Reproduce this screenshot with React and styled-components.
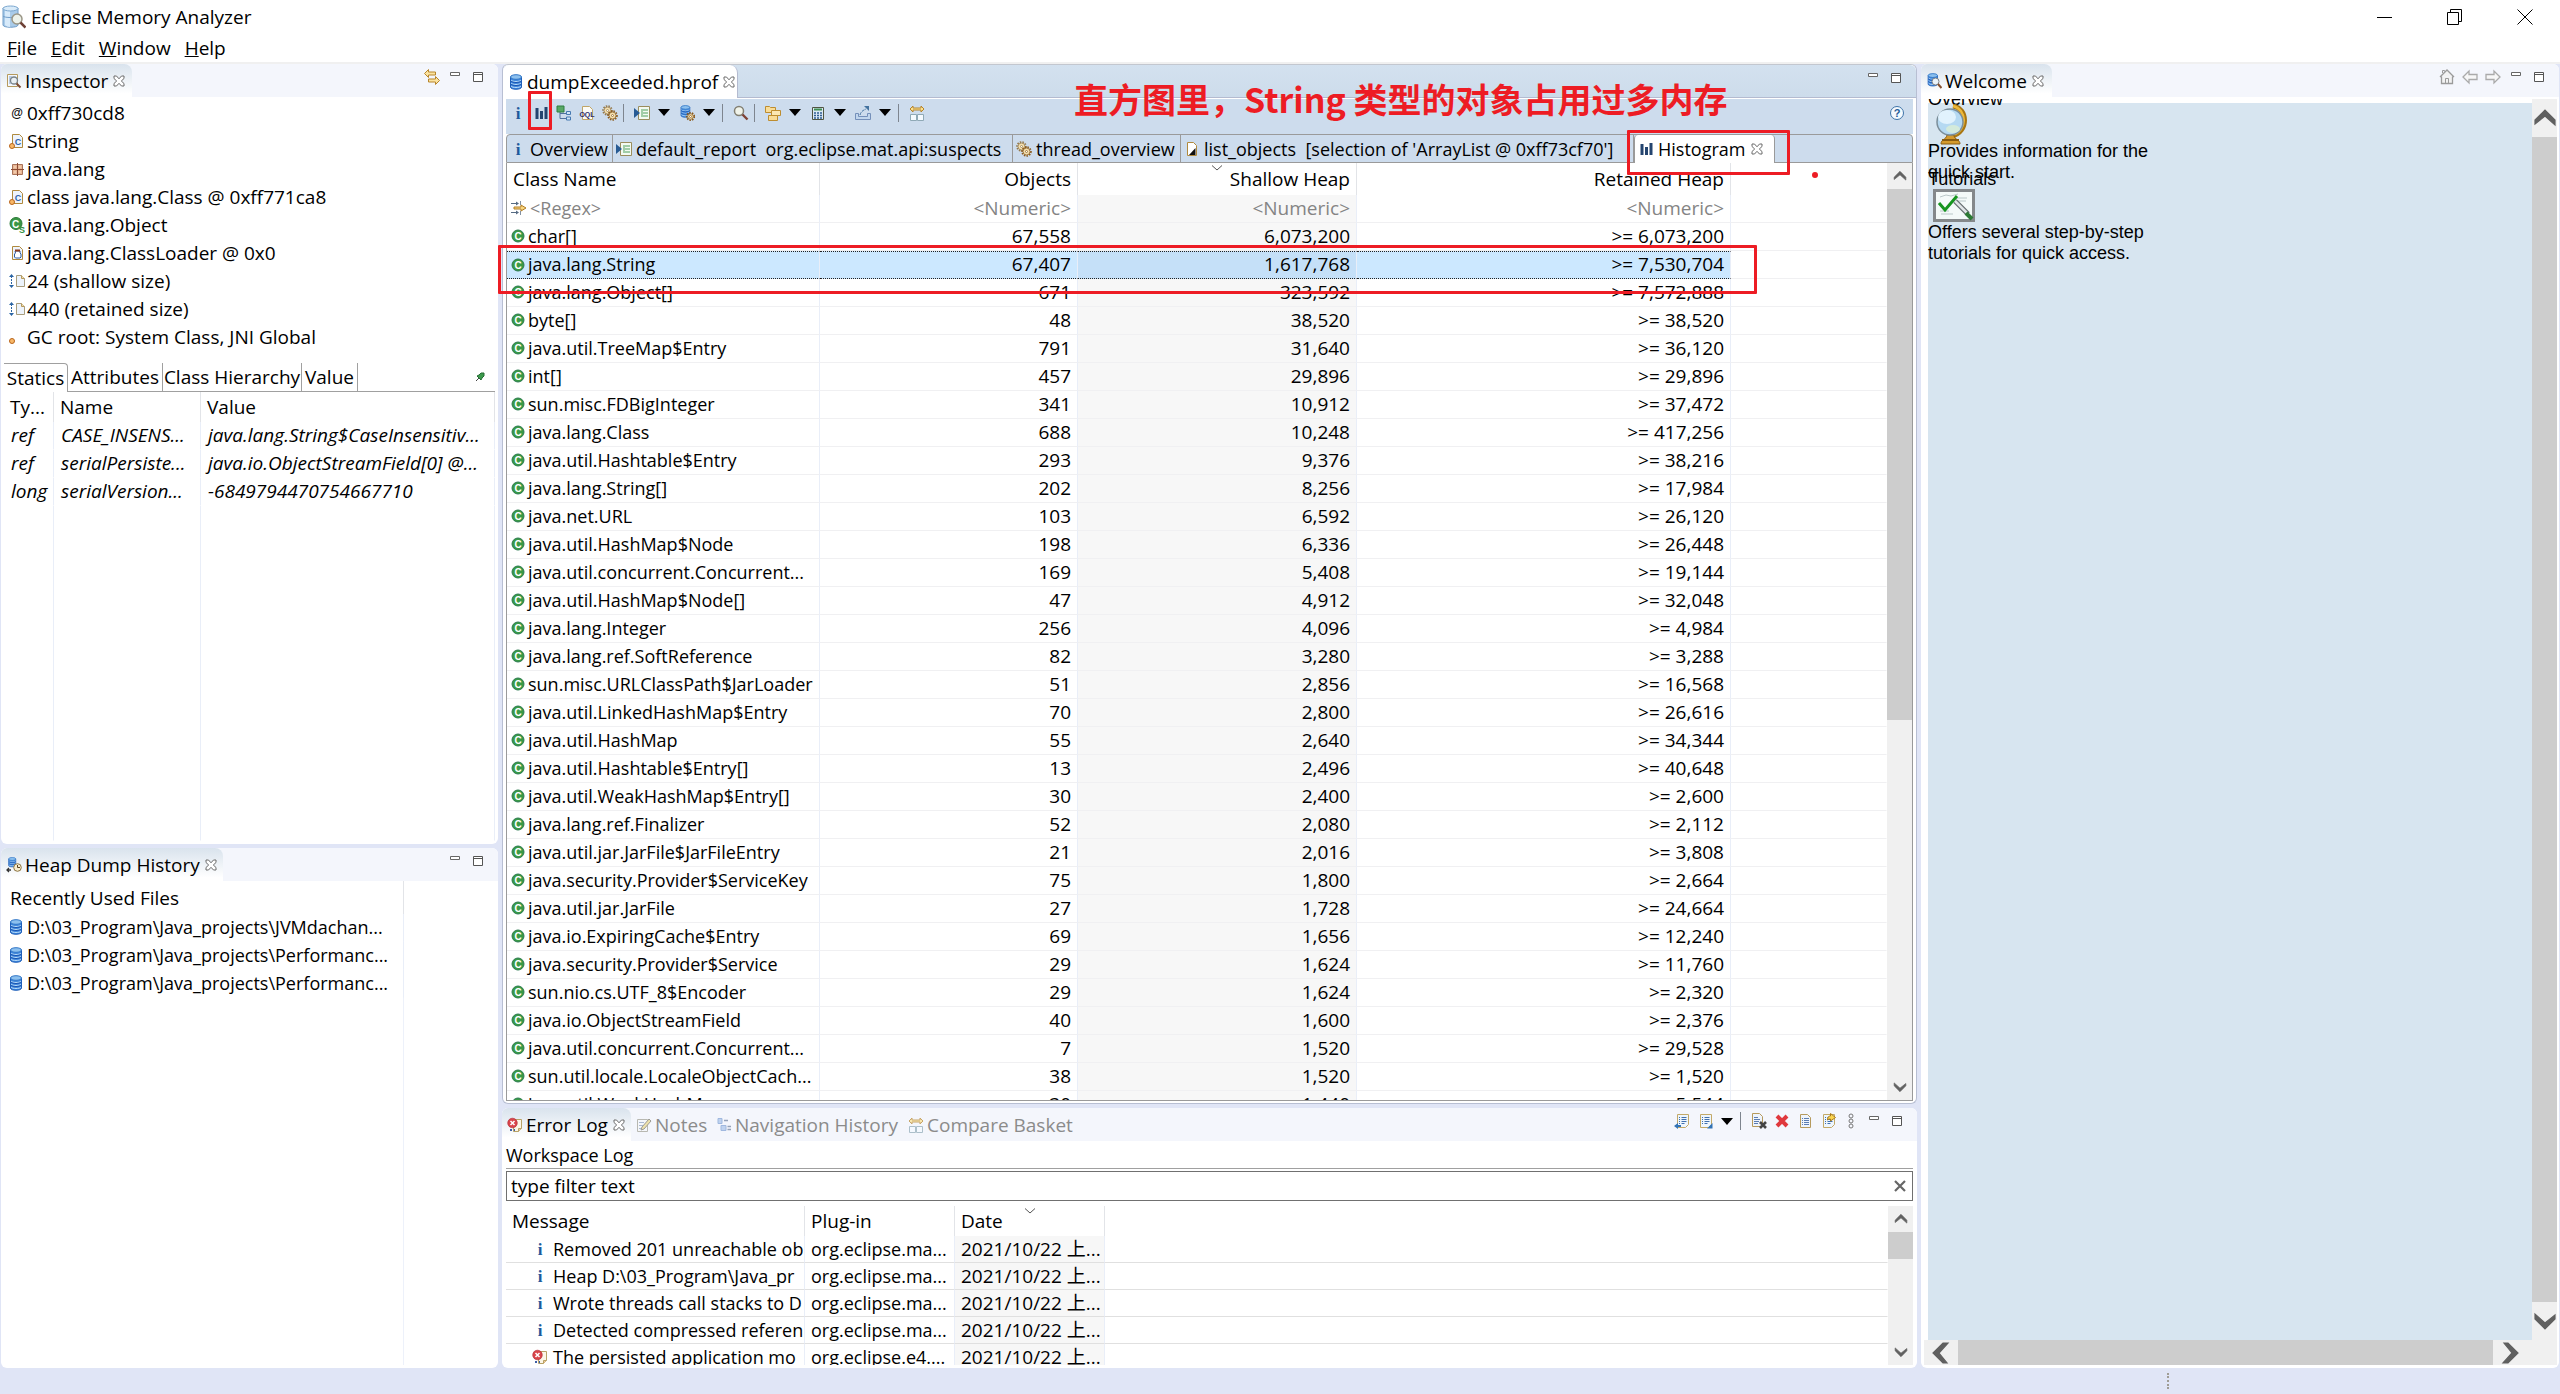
import { useState } from "react";
import styled, { createGlobalStyle, css } from "styled-components";

const GlobalStyle = createGlobalStyle`
  * {
    box-sizing: border-box;
  }
  body {
    margin: 0;
    background: #e0e5f6;
    color: #000;
    font-family: "Open Sans", "Noto Sans CJK SC", sans-serif;
    font-size: 19px;
    line-height: 28px;
  }
  button, input {
    font: inherit;
    color: inherit;
    padding: 0;
    margin: 0;
    border: none;
    background: none;
  }
  h1, h2, p, ul {
    margin: 0;
    padding: 0;
    font-weight: 400;
    list-style: none;
  }
  svg {
    display: block;
    flex: none;
  }
`;

/* ---------- icons ---------- */

const Svg = ({ size = 16, w, h, box = "0 0 16 16", children }) => (
    <svg width={w || size} height={h || size} viewBox={box} fill="none" aria-hidden="true">
        {children}
    </svg>
);

const Letter = ({ x, y, size, fill, serif, children }) => (
    <text
        x={x}
        y={y}
        fontSize={size}
        fill={fill}
        fontWeight="700"
        textAnchor="middle"
        fontFamily={serif ? "Liberation Serif, serif" : "Liberation Sans, sans-serif"}
    >
        {children}
    </text>
);

const DbShape = () => (
    <>
        <path d="M2.5 3v10c0 3 11 3 11 0V3z" fill="#3f87dd" stroke="#1f5fb8" />
        <path d="M3 6c1 2 9 2 10 0M3 9c1 2 9 2 10 0M3 12c1 2 9 2 10 0" stroke="#b9dcf8" />
        <path d="M3 7c1 2 9 2 10 0M3 10c1 2 9 2 10 0" stroke="#1a55b0" />
        <ellipse cx="8" cy="3" rx="5.5" ry="2.3" fill="#8cc0ee" stroke="#2f75c6" />
    </>
);
const GearShape = ({ x, y, r, color = "#8a5a1c", fill = "#f3dfae" }) => (
    <>
        <circle cx={x} cy={y} r={r} stroke={color} strokeWidth="1.6" strokeDasharray="1.5 1.2" />
        <circle cx={x} cy={y} r={r - 1} fill={fill} stroke={color} strokeWidth=".8" />
        <circle cx={x} cy={y} r="1" fill="#fff" stroke={color} strokeWidth=".7" />
    </>
);
const PageShape = () => <path d="M3.5 1.5h7l3 3v10h-10z" fill="#eef4fc" stroke="#b08a3e" />;

const AppIcon = () => (
    <Svg w={24} h={24} box="0 0 24 24">
        <path d="M1 3v17c0 3 15 3 15 0V3z" fill="#a9cbe9" stroke="#6f9cc8" />
        <path d="M3 5v15c1 1 3 2 5 2V5z" fill="#d7eafa" />
        <path d="M1 11c1 2 14 2 15 0" stroke="#6f9cc8" />
        <ellipse cx="8.500" cy="3.500" rx="7.500" ry="2.500" fill="#d9ebf9" stroke="#7ba7cf" />
        <circle cx="15" cy="14" r="5" fill="#edf2ea" stroke="#9b9787" strokeWidth="1.500" />
        <path d="M18.500 17.500l5 5" stroke="#6e4136" strokeWidth="2.500" />
    </Svg>
);
const InspectorIcon = () => (
    <Svg>
        <path d="M1.500 1.500h10v12h-10z" fill="#f4f8fd" stroke="#b69a5d" />
        <path d="M3 4h3M3 6h2M3 8h2M3 10h3" stroke="#7f9cc4" />
        <circle cx="8" cy="7.500" r="3.500" fill="#eaf0f4" stroke="#77828a" strokeWidth="1.300" />
        <path d="M10.500 10.500l4 4" stroke="#7b4a34" strokeWidth="2" />
    </Svg>
);
const AtIcon = () => <Svg><Letter x="8" y="12" size="12" fill="#111">@</Letter></Svg>;
const ObjectIcon = () => (
    <Svg>
        <PageShape />
        <Letter x="9" y="11.500" size="9" fill="#2b63ad">C</Letter>
        <circle cx="3" cy="13" r="2.500" fill="#f8b868" stroke="#b9641a" />
    </Svg>
);
const PackageIcon = () => (
    <Svg>
        <path d="M3.500 3.500h10v10h-10z" fill="#e9b794" stroke="#a8735a" />
        <path d="M8.500 2v13M2 8.500h13" stroke="#8d4b33" />
        <path d="M6 5v2M11 5v2M6 10v2M11 10v2" stroke="#f7dcc6" />
    </Svg>
);
const SuperIcon = () => (
    <Svg>
        <circle cx="7" cy="6.500" r="6" fill="#3b9646" stroke="#2b7a38" />
        <Letter x="6.500" y="10.500" size="10" fill="#fff">C</Letter>
        <Letter x="13" y="15.500" size="9" fill="#2f9040">S</Letter>
    </Svg>
);
const LoaderIcon = () => (
    <Svg>
        <PageShape />
        <path d="M6 6h5v2l1 1v3l-1 1H6.500l-1-1V9l1-1z" fill="#fff" stroke="#2c5c9e" />
        <path d="M6 5.500h5" stroke="#8a3a1a" strokeWidth="2" />
    </Svg>
);
const SizeIcon = () => (
    <Svg>
        <path d="M2.500 3v10" stroke="#2a64a3" strokeDasharray="2 1" />
        <path d="M0 4l2.500-3L5 4zM0 12l2.500 3L5 12z" fill="#2a64a3" />
        <path d="M7.500 2.500h5l3 3v8h-8z" fill="#edf3fb" stroke="#a99d7c" />
        <path d="M12.500 2.500v3h3" fill="#f3dfae" stroke="#b69a5d" />
    </Svg>
);
const RootIcon = () => (
    <Svg>
        <circle cx="3" cy="12" r="2.500" fill="#f8b868" stroke="#b9641a" />
    </Svg>
);
const DbIcon = () => <Svg><DbShape /></Svg>;
const HistoryIcon = () => (
    <Svg>
        <g transform="translate(1 0) scale(.65)"><DbShape /></g>
        <circle cx="11.500" cy="10.500" r="3.800" fill="#f7eccf" stroke="#8d7440" />
        <path d="M11.500 8v2.500H14" stroke="#5a4520" />
        <path d="M5 13H1M3 11l-2 2 2 2" stroke="#333" strokeWidth="1.300" />
    </Svg>
);
const InfoIcon = () => <Svg><Letter x="8" y="14" size="17" fill="#1e5a9c" serif>i</Letter></Svg>;
const BarsIcon = () => (
    <Svg>
        <path d="M4 3v11M8.500 6v8M13 2v12" stroke="#24446f" strokeWidth="3" />
    </Svg>
);
const TreeIcon = () => (
    <Svg>
        <path d="M4 7v6.500h6M4 8.500h6" stroke="#50719e" />
        <path d="M1 1h7v6H1z" fill="#58a866" stroke="#2f7f40" />
        <path d="M10.500 6.500h4v3h-4zM10.500 12h4v3h-4z" fill="#cfe4f7" stroke="#4679b1" />
    </Svg>
);
const OqlIcon = () => (
    <Svg>
        <path d="M3.500 1.500h7l3 3v10h-10z" fill="#fbfbf6" stroke="#c0a566" />
        <Letter x="8" y="11.500" size="7" fill="#2c2a66">OQL</Letter>
    </Svg>
);
const GearsIcon = () => (
    <Svg>
        <GearShape x={5.5} y={5.5} r={4.5} color="#94794b" />
        <GearShape x={10.5} y={10.5} r={4.5} />
    </Svg>
);
const ReportIcon = () => (
    <Svg>
        <path d="M4.500 1.500h11v13h-11z" fill="#f3faf1" stroke="#9a8d5d" />
        <path d="M8 4v8M9 5h5M9 8h5M9 11h5" stroke="#4f9f5c" />
        <path d="M0 3l6 5-6 5z" fill="#275b94" />
    </Svg>
);
const DbGearIcon = () => (
    <Svg>
        <g transform="scale(.8)"><DbShape /></g>
        <GearShape x={11.5} y={11.5} r={3.8} />
    </Svg>
);
const SearchIcon = () => (
    <Svg>
        <circle cx="6" cy="6" r="4.500" fill="#f0f3ea" stroke="#827f72" strokeWidth="1.500" />
        <path d="M9.500 9.500l5 5" stroke="#7e4235" strokeWidth="2.400" />
    </Svg>
);
const FoldersIcon = () => (
    <Svg>
        <path d="M.5 1.500h4l1 1h5v5H.5z" fill="#f9dc97" stroke="#bd8d30" />
        <path d="M6.500 5.500h9v5h-9z" fill="#fbe7b3" stroke="#bd8d30" />
        <path d="M3.500 10.500h9v5h-9z" fill="#f9dc97" stroke="#bd8d30" />
    </Svg>
);
const CalcIcon = () => (
    <Svg>
        <path d="M2.500 2.500h11v12h-11z" fill="#dbe9f6" stroke="#505541" />
        <path d="M4 4.500h8" stroke="#3f8f51" strokeWidth="2" />
        <path d="M4 8h8M4 10.500h8M4 13h8" stroke="#315e91" strokeWidth="1.500" strokeDasharray="2 1" />
    </Svg>
);
const ExportIcon = () => (
    <Svg>
        <path d="M.5 8.500h3v3h9v-3h3v6H.5z" fill="#c1d6ed" stroke="#7590ba" />
        <path d="M5 10c1-4 4-5 6-6" stroke="#44739f" strokeDasharray="3 1" />
        <path d="M9 1h5v5z" fill="#44739f" />
    </Svg>
);
const CompareIcon = () => (
    <Svg>
        <path d="M1 4l3-3v2h8V1l3 3-3 3V5H4v2z" fill="#fbe08f" stroke="#b5842c" />
        <path d="M1.500 9.500h6v6h-6zM8.500 9.500h6v6h-6z" fill="#f4faff" stroke="#8fa9b6" />
    </Svg>
);
const ListIcon = () => (
    <Svg>
        <path d="M3.500 1.500h6l3 3v10h-9z" fill="#fff" stroke="#b08a3e" />
        <path d="M11.500 7v7H5z" fill="#111" />
    </Svg>
);
const FilterIcon = () => (
    <Svg>
        <path d="M0 3.500h6M0 12.500h6" stroke="#566b83" />
        <path d="M5 1.500l3 2-3 2zM5 10.500l3 2-3 2z" fill="#566b83" />
        <path d="M9.500 1v4M9.500 11v4" stroke="#8391a2" />
        <path d="M3 7h7V5l5 3-5 3V9H3z" fill="#fbd780" stroke="#b07d24" />
    </Svg>
);
const ClassIcon = () => (
    <Svg size={14} box="0 0 14 14">
        <circle cx="7" cy="7" r="6" fill="#3a9a45" stroke="#2b7a50" />
        <Letter x="7" y="10.500" size="10" fill="#fff">C</Letter>
    </Svg>
);
const ErrorIcon = () => (
    <Svg>
        <path d="M6.500 2.500h8v9l-3 3h-5z" fill="#fbf6e7" stroke="#b8a267" />
        <path d="M11.500 14.500v-3h3" fill="#f0c89a" stroke="#b8a267" />
        <circle cx="5.500" cy="6" r="4.800" fill="#d9444a" stroke="#b02a35" strokeWidth=".6" />
        <path d="M3.500 4l4 4M7.500 4l-4 4" stroke="#fff" strokeWidth="1.500" />
        <path d="M3 13h2M7 13h1" stroke="#3d5fa5" strokeWidth="2" />
    </Svg>
);
const NotesIcon = () => (
    <Svg>
        <path d="M1.500 2.500h10v12h-10z" fill="#f6f8fb" stroke="#a09e92" />
        <path d="M3 5.500h5M3 8.500h4M3 11.500h6" stroke="#8fa1c0" />
        <path d="M6 10l7-8 2 2-7 8-3 1z" fill="#ecd98a" stroke="#78766a" />
    </Svg>
);
const NavIcon = () => (
    <Svg>
        <path d="M2 1.500h4v5H2zM5 8.500h5v5H5z" fill="#a9c4ea" stroke="#7d9fd3" />
        <path d="M8 3.500h4M11.500 9.500H15M11.500 12.500H15" stroke="#6c7f9c" strokeWidth="1.300" />
    </Svg>
);
const LinkIcon = () => (
    <Svg>
        <path d="M.5 4.500l4-4v2.500h7v3h-7v2.500z" fill="#fbe3a1" stroke="#b8862b" />
        <path d="M15.500 11.500l-4-4V10h-7v3h7v2.500z" fill="#fbe3a1" stroke="#b8862b" />
    </Svg>
);
const MinIcon = () => <Svg><path d="M3.500 3.500h9v3h-9z" fill="#fff" stroke="#666" /></Svg>;
const MaxIcon = () => (
    <Svg><path d="M3.500 3.500h9v9h-9zM3.500 5.500h9" fill="#fff" stroke="#555" /></Svg>
);
const CloseIcon = () => (
    <Svg size={12} box="0 0 12 12">
        <path
            d="M1 1h2.500L6 3.800 8.500 1H11v2.500L8.300 6 11 8.500V11H8.500L6 8.300 3.500 11H1V8.500L3.700 6 1 3.500z"
            fill="#fff"
            stroke="#6b6b6b"
        />
    </Svg>
);
const HomeIcon = () => (
    <Svg>
        <path d="M2.500 7.500v7h11v-7M1 8l7-7 7 7" fill="#f2f2f2" stroke="#9b9b9b" strokeWidth="1.300" />
        <path d="M6.500 14V9.500h3V14M3.500 4V1.500h2v1" stroke="#9b9b9b" />
    </Svg>
);
const BackIcon = () => (
    <Svg><path d="M1 8l6-6v3.500h8v5H7V14z" fill="#f7f7f7" stroke="#aaa" strokeWidth="1.300" /></Svg>
);
const ForwardIcon = () => (
    <Svg><path d="M15 8L9 2v3.500H1v5h8V14z" fill="#f7f7f7" stroke="#aaa" strokeWidth="1.300" /></Svg>
);
const HelpIcon = () => (
    <Svg>
        <circle cx="8" cy="8" r="6.500" fill="#f5faff" stroke="#3f74a8" />
        <Letter x="8" y="12" size="11" fill="#275d98">?</Letter>
    </Svg>
);
const LogLines = () => (
    <>
        <path d="M3.500 1.500h11v10l-3 3h-8z" fill="#eef6fd" stroke="#c3a968" />
        <path d="M5 4.500h1M7.500 4.500h5M5 6.500h1M7.500 6.500h5M5 8.500h1M7.500 8.500h5M5 10.500h1M7.500 10.500h3" stroke="#4170ae" />
    </>
);
const ExportLogIcon = () => (
    <Svg><LogLines /><path d="M0 13l4-3v2h3v2H4v2z" fill="#3273b5" /></Svg>
);
const ImportLogIcon = () => (
    <Svg><LogLines /><path d="M15.500 10v5.500H10z" fill="#3273b5" /></Svg>
);
const ClearLogIcon = () => (
    <Svg>
        <path d="M1.500.5h7l3 3v10h-10z" fill="#eef4fc" stroke="#b69a5d" />
        <path d="M3 4.500h4M3 6.500h6M3 8.500h5M3 10.500h4" stroke="#5b7db3" />
        <path d="M9 9l6 6M15 9l-6 6" stroke="#444" strokeWidth="2.600" />
    </Svg>
);
const DeleteIcon = () => (
    <Svg><path d="M3 3l10 10M13 3L3 13" stroke="#e0383d" strokeWidth="4" /></Svg>
);
const OpenLogIcon = () => (
    <Svg>
        <path d="M3.500 1.500h7l3 3v10h-10z" fill="#eef4fc" stroke="#b69a5d" />
        <path d="M5 5.500h1M7 5.500h5M5 7.500h1M7 7.500h5M5 9.500h1M7 9.500h5M5 11.500h1M7 11.500h5" stroke="#5b7db3" />
    </Svg>
);
const RestoreLogIcon = () => (
    <Svg>
        <LogLines />
        <path d="M7.500 7c0-3 1-4 3-4V.5l5 4-5 3.500V6c-1 0-2 0-3 1z" fill="#fbd54f" stroke="#a87a1d" />
    </Svg>
);
const MenuDotsIcon = () => (
    <Svg>
        <circle cx="8" cy="3" r="2" stroke="#777" />
        <circle cx="8" cy="8" r="2" stroke="#777" />
        <circle cx="8" cy="13" r="2" stroke="#777" />
    </Svg>
);
const PinIcon = () => (
    <Svg size={10} box="0 0 10 10">
        <path d="M1 9l3-3" stroke="#444" />
        <path d="M2 4l2-1 2-2h3v3L7 6 6 8z" fill="#3c9a4c" stroke="#246c33" />
    </Svg>
);
const WelcomeIcon = () => (
    <Svg>
        <g transform="scale(.85)"><DbShape /></g>
        <circle cx="9.500" cy="8.500" r="3.500" fill="#eaf3fa" stroke="#7b7f83" />
        <path d="M12 11l3.500 4" stroke="#84502f" strokeWidth="2" />
    </Svg>
);
const DownIcon = () => <Svg w={12} h={7} box="0 0 12 7"><path d="M0 0h12L6 7z" fill="#000" /></Svg>;
const SortMark = () => (
    <Svg w={12} h={6} box="0 0 12 6"><path d="M1 .5l5 4.500 5-4.500" stroke="#555" /></Svg>
);

const angles = { up: 0, right: 90, down: 180, left: 270 };
const Chevron = ({ dir, size }) => (
    <Svg size={size} box="0 0 12 12">
        <path d="M1 9V7l5-5 5 5v2.500L6 5z" fill="#606060" stroke="#606060" strokeWidth=".6" transform={`rotate(${angles[dir]} 6 6)`} />
    </Svg>
);

const GlobeIcon = () => (
    <Svg w={36} h={42} box="0 0 36 42">
        <path d="M20 2c15 2 16 26-1 30" stroke="#a87512" strokeWidth="5" />
        <path d="M20 2c14 3 15 25-1 29" stroke="#edb83a" strokeWidth="2.500" />
        <path d="M8 40c0-5 5-4 6-9h7c0 5 6 4 6 9z" fill="#d49a2d" stroke="#8a5c10" />
        <path d="M9 36h17" stroke="#8a5c10" strokeWidth="2" />
        <circle cx="17" cy="18" r="13" fill="#b5d9f2" stroke="#7c8e99" strokeWidth="1.500" />
        <ellipse cx="14" cy="13" rx="9" ry="7" fill="#e1f2fd" />
        <ellipse cx="20" cy="25" rx="7" ry="4" fill="#d3eadb" />
    </Svg>
);
const BoardIcon = () => (
    <Svg w={42} h={33} box="0 0 42 33">
        <path d="M1.500 1.500h39v30h-39z" fill="#f4faf9" stroke="#84888b" strokeWidth="3" />
        <path d="M7 8l6-2 5 1 7-2M7 22h9M8 25h12M24 9h10M25 12h8" stroke="#bac8c9" />
        <path d="M6 14l6 7L24 7" stroke="#16951f" strokeWidth="3" />
        <path d="M22 12l13 13" stroke="#646b6e" strokeWidth="5" />
        <path d="M22 12l12 12" stroke="#dfe4e6" strokeWidth="2.500" />
        <path d="M33 24l6 6" stroke="#2c7a35" strokeWidth="4" />
    </Svg>
);

/* ---------- window ---------- */

const Shell = styled.div`
    display: flex;
    flex-direction: column;
    height: 100vh;
`;
const TitleBar = styled.header`
    display: flex;
    align-items: center;
    height: 34px;
    padding-left: 2px;
    background: #fff;
`;
const AppTitle = styled.h1`
    flex: 1;
    padding-left: 5px;
    font-size: 19px;
`;
const WindowButton = styled.button`
    display: grid;
    place-items: center;
    width: 70px;
    height: 34px;
`;
const MenuBar = styled.nav`
    display: flex;
    gap: 14px;
    height: 30px;
    padding-left: 7px;
    background: #fff;
    border-bottom: 2px solid #f0f0f0;
`;
const MenuItem = styled.button`
    white-space: nowrap;
`;
const Workbench = styled.main`
    flex: 1;
    min-height: 0;
    display: grid;
    grid-template-columns: 497fr 1415fr 638fr;
    gap: 4px;
    padding: 0 1px;
`;
const Column = styled.div`
    display: grid;
    grid-template-rows: ${(p) => p.$rows};
    gap: 4px;
    min-width: 0;
    min-height: 0;
`;
const StatusBar = styled.footer`
    display: flex;
    justify-content: flex-end;
    height: 26px;
    padding: 5px 391px 5px 0;
`;
const Grip = styled.div`
    width: 2px;
    border-left: 2px dotted #a09d95;
`;

/* ---------- panels ---------- */

const Panel = styled.section`
    position: relative;
    display: flex;
    flex-direction: column;
    min-width: 0;
    min-height: 0;
    padding-bottom: 3px;
    background: #fff;
    border-radius: 6px;
    ${(p) =>
        p.$editor &&
        css`
            padding: 0 3px;
            border: 1px solid #b8bfd3;
            border-top-color: #c3c7cf;
        `}
`;
const PanelHead = styled.div`
    display: flex;
    height: 33px;
    padding-right: 9px;
    background: #f4f6fc;
    border-radius: 6px 6px 0 0;
    ${(p) =>
        p.$editor &&
        css`
            margin: 0 -3px 1px;
            background: linear-gradient(#d3e1ef, #cddceb);
            border-bottom: 1px solid #b4bbd0;
        `}
`;
const ViewTab = styled.div`
    display: flex;
    align-items: center;
    gap: 3px;
    width: ${(p) => p.$w}px;
    padding-left: 5px;
    white-space: nowrap;
    color: ${(p) => (p.$active ? "#000" : "#8b8b8b")};
    border-radius: 6px 8px 0 0;
    ${(p) => p.$active && "background: linear-gradient(#d9e3ed, #fff 90%);"}
    ${(p) => p.$editor && "background: #fff; border-right: 1px solid #b4bbd0; height: 33px;"}
    ${(p) => !p.$active && "svg { opacity: 0.7; }"}
`;
const CloseButton = styled.button`
    margin-left: 2px;
`;
const HeadTools = styled.div`
    display: flex;
    margin-left: auto;
    height: 26px;
`;
const IconButton = styled.button`
    display: grid;
    place-items: center;
    width: 23px;
    flex: none;
`;
const DropButton = styled.button`
    display: grid;
    place-items: center;
    width: 22px;
    flex: none;
`;
const Separator = styled.span`
    width: 1px;
    height: 18px;
    margin: 0 6px 0 2px;
    align-self: center;
    background: #7e858f;
`;

/* ---------- inspector ---------- */

const ItemList = styled.ul`
    padding: 2px 0 12px 8px;
`;
const Item = styled.li`
    display: flex;
    align-items: center;
    gap: 2px;
    height: 28px;
    white-space: nowrap;
`;
const SubTabs = styled.div`
    display: flex;
    align-items: center;
    height: 29px;
    margin: 0 3px;
    padding-right: 10px;
    border-bottom: 1px solid #a0a0a0;
`;
const SubTab = styled.button`
    height: 29px;
    width: ${(p) => p.$w}px;
    white-space: nowrap;
    border-right: 1px solid #a0a0a0;
    ${(p) => p.$active && "background: #fff; border-top: 1px solid #a0a0a0; border-radius: 0 4px 0 0;"}
`;
const Spacer = styled.span`
    flex: 1;
`;

/* ---------- tables ---------- */

const TableArea = styled.div`
    flex: 1;
    display: flex;
    min-height: 0;
    margin: ${(p) => p.$margin || "0"};
    background: #fff;
`;
const TableClip = styled.div`
    flex: 1;
    min-width: 0;
    overflow: hidden;
    padding-left: ${(p) => p.$indent || 0}px;
    ${(p) => p.$ruled && "background: linear-gradient(#edf1fa, #edf1fa) 402px 0 / 1px 100% no-repeat;"}
`;
const Table = styled.table`
    width: 100%;
    ${(p) => p.$fill && "height: 100%;"}
    table-layout: fixed;
    border-collapse: separate;
    border-spacing: 0;
`;
const Th = styled.th`
    position: relative;
    height: ${(p) => p.$h || 30}px;
    padding: 0 6px;
    font-weight: 400;
    text-align: ${(p) => (p.$num ? "right" : "left")};
    white-space: nowrap;
    border-right: 1px solid ${(p) => (p.$last ? "transparent" : "#e2e4e8")};
`;
const SortSpot = styled.span`
    position: absolute;
    top: 2px;
    left: 50%;
    margin-left: -6px;
`;
const Tr = styled.tr`
    height: ${(p) => p.$h || 28}px;
    ${(p) => p.$italic && "font-style: italic;"}
    ${(p) => p.$muted && "color: #848484;"}
`;
const Td = styled.td`
    padding: 0 ${(p) => (p.$num ? 6 : 0)}px 0 ${(p) => p.$pad ?? 4}px;
    line-height: 26px;
    text-align: ${(p) => (p.$num ? "right" : "left")};
    white-space: nowrap;
    overflow: hidden;
    vertical-align: top;
    background: ${(p) => (p.$sorted ? "#f7f7f7" : "transparent")};
    border-right: 1px solid ${(p) => (p.$last ? "transparent" : "#e9eef8")};
    border-bottom: 1px solid ${(p) => (p.$plain ? "transparent" : p.$line || "#f0f0f2")};
    ${(p) =>
        p.$selected &&
        css`
            line-height: 25px;
            background: ${p.$sorted ? "#c5e0f8" : "#cce8ff"};
            border-top: 1px dotted #222;
            border-bottom: 1px dotted #222;
        `}
`;
const NameCell = styled.div`
    display: flex;
    align-items: center;
    gap: ${(p) => p.$gap || 3}px;
    font-size: 18px;
`;

/* ---------- scroll bars ---------- */

const Bar = styled.div`
    display: flex;
    flex-direction: ${(p) => (p.$across ? "row" : "column")};
    flex: none;
    ${(p) => (p.$across ? "height" : "width")}: ${(p) => p.$size}px;
    background: #f0f0f0;
`;
const BarButton = styled.button`
    display: grid;
    place-items: center;
    flex: none;
    ${(p) => (p.$across ? "width" : "height")}: ${(p) => p.$len}px;
`;
const Track = styled.div`
    flex: 1;
    display: flex;
    flex-direction: inherit;
`;
const Thumb = styled.div`
    flex: 0 0 ${(p) => p.$part};
    background: #cdcdcd;
`;

const ScrollBar = ({ across, size, len, icon, part }) => (
    <Bar $across={across} $size={size}>
        <BarButton $across={across} $len={len} aria-label={across ? "Scroll left" : "Scroll up"}>
            <Chevron dir={across ? "left" : "up"} size={icon} />
        </BarButton>
        <Track>
            <Thumb $part={part} />
        </Track>
        <BarButton $across={across} $len={len} aria-label={across ? "Scroll right" : "Scroll down"}>
            <Chevron dir={across ? "right" : "down"} size={icon} />
        </BarButton>
    </Bar>
);

/* ---------- editor ---------- */

const Toolbar = styled.div`
    display: flex;
    height: 35px;
    padding: 0 5px 8px 0;
    background: #cddced;
`;
const PageTabs = styled.div`
    display: flex;
    height: 29px;
    background: #cddced;
    border: 1px solid #9a9a9a;
    border-radius: 4px 4px 0 0;
    font-size: 18px;
`;
const PageTab = styled.div`
    display: flex;
    align-items: center;
    gap: 4px;
    width: ${(p) => p.$w}px;
    height: ${(p) => (p.$active ? 28 : 27)}px;
    padding-left: 3px;
    overflow: hidden;
    white-space: pre;
    border-right: 1px solid #9a9a9a;
    ${(p) => p.$active && "background: #fff; border-left: 1px solid #9a9a9a; border-radius: 4px 4px 0 0;"}
`;
const PageBody = styled.div`
    flex: 1;
    display: flex;
    min-height: 0;
    margin-bottom: 2px;
    border: 1px solid #9a9a9a;
    border-top: none;
`;

const Mark = styled.div`
    position: absolute;
    z-index: 2;
    left: ${(p) => p.$x}px;
    top: ${(p) => p.$y}px;
    width: ${(p) => p.$w}px;
    height: ${(p) => p.$h}px;
    border: ${(p) => p.$line}px solid #ed1c24;
    border-radius: ${(p) => (p.$dot ? "50%" : "1px")};
    pointer-events: none;
`;
const MarkText = styled.p`
    position: absolute;
    z-index: 2;
    left: 571px;
    top: 9px;
    color: #ed1c24;
    font-family: "Noto Sans CJK SC", sans-serif;
    font-size: 34px;
    font-weight: 700;
    line-height: 50px;
    white-space: nowrap;
    pointer-events: none;
`;

/* ---------- error log ---------- */

const LogTitle = styled.h2`
    height: 28px;
    margin: 0 4px;
    font-size: 18px;
    line-height: 28px;
    border-bottom: 1px solid #a0a0a0;
`;
const FilterBox = styled.div`
    display: flex;
    align-items: center;
    height: 30px;
    margin: 2px 4px 5px;
    padding-right: 4px;
    border: 1px solid #707070;
`;
const FilterInput = styled.input`
    flex: 1;
    padding-left: 4px;
    outline: none;
`;

/* ---------- welcome ---------- */

const WelcomeBody = styled.div`
    flex: 1;
    display: flex;
    min-height: 0;
    margin: 2px 2px 0 3px;
    flex-direction: column;
`;
const WelcomeRow = styled.div`
    flex: 1;
    display: flex;
    min-height: 0;
`;
const WelcomeClip = styled.div`
    flex: 1;
    padding: 4px 0 0 4px;
    overflow: hidden;
    font-family: "Liberation Sans", sans-serif;
    font-size: 18px;
    line-height: 21px;
`;
const WelcomePage = styled.div`
    display: flex;
    flex-direction: column;
    height: 100%;
    background: #d7e5f0;
`;
const TopicTitle = styled.h2`
    margin-top: -14px;
    font-size: 18px;
    line-height: 21px;
`;
const TopicImage = styled.div`
    height: ${(p) => p.$h}px;
    padding-left: 5px;
    margin-top: ${(p) => p.$lift}px;
`;
const TopicText = styled.p`
    width: 240px;
`;
const Corner = styled.div`
    display: flex;
    padding-right: 30px;
    background: #f0f0f0;
    > div {
        flex: 1;
    }
`;

/* ---------- data ---------- */

const menus = ["File", "Edit", "Window", "Help"];

const inspectorItems = [
    [AtIcon, "0xff730cd8"],
    [ObjectIcon, "String"],
    [PackageIcon, "java.lang"],
    [ObjectIcon, "class java.lang.Class @ 0xff771ca8"],
    [SuperIcon, "java.lang.Object"],
    [LoaderIcon, "java.lang.ClassLoader @ 0x0"],
    [SizeIcon, "24 (shallow size)"],
    [SizeIcon, "440 (retained size)"],
    [RootIcon, "GC root: System Class, JNI Global"],
];

const inspectorTabs = [
    ["Statics", 64],
    ["Attributes", 95],
    ["Class Hierarchy", 139],
    ["Value", 56],
];

const statics = [
    ["ref", "CASE_INSENS...", "java.lang.String$CaseInsensitiv..."],
    ["ref", "serialPersiste...", "java.io.ObjectStreamField[0] @..."],
    ["long", "serialVersion...", "-6849794470754667710"],
];

const recentFiles = [
    "D:\\03_Program\\Java_projects\\JVMdachan...",
    "D:\\03_Program\\Java_projects\\Performanc...",
    "D:\\03_Program\\Java_projects\\Performanc...",
];

const tools = [
    ["Overview", InfoIcon],
    ["Histogram", BarsIcon],
    ["Dominator tree", TreeIcon],
    ["OQL", OqlIcon],
    ["Threads", GearsIcon],
    "sep",
    ["Run report", ReportIcon],
    "drop",
    ["Query browser", DbGearIcon],
    "drop",
    "sep",
    ["Find object", SearchIcon],
    "sep",
    ["Group", FoldersIcon],
    "drop",
    ["Calculate retained size", CalcIcon],
    "drop",
    ["Export", ExportIcon],
    "drop",
    "sep",
    ["Compare", CompareIcon],
];

const pages = [
    ["Overview", InfoIcon, 106],
    ["default_report  org.eclipse.mat.api:suspects", ReportIcon, 400],
    ["thread_overview", GearsIcon, 168],
    ["list_objects  [selection of 'ArrayList @ 0xff73cf70']", ListIcon, 453],
    ["Histogram", BarsIcon, 141],
];

const histogram = [
    ["char[]", "67,558", "6,073,200", "6,073,200"],
    ["java.lang.String", "67,407", "1,617,768", "7,530,704"],
    ["java.lang.Object[]", "671", "323,592", "7,572,888"],
    ["byte[]", "48", "38,520", "38,520"],
    ["java.util.TreeMap$Entry", "791", "31,640", "36,120"],
    ["int[]", "457", "29,896", "29,896"],
    ["sun.misc.FDBigInteger", "341", "10,912", "37,472"],
    ["java.lang.Class", "688", "10,248", "417,256"],
    ["java.util.Hashtable$Entry", "293", "9,376", "38,216"],
    ["java.lang.String[]", "202", "8,256", "17,984"],
    ["java.net.URL", "103", "6,592", "26,120"],
    ["java.util.HashMap$Node", "198", "6,336", "26,448"],
    ["java.util.concurrent.Concurrent...", "169", "5,408", "19,144"],
    ["java.util.HashMap$Node[]", "47", "4,912", "32,048"],
    ["java.lang.Integer", "256", "4,096", "4,984"],
    ["java.lang.ref.SoftReference", "82", "3,280", "3,288"],
    ["sun.misc.URLClassPath$JarLoader", "51", "2,856", "16,568"],
    ["java.util.LinkedHashMap$Entry", "70", "2,800", "26,616"],
    ["java.util.HashMap", "55", "2,640", "34,344"],
    ["java.util.Hashtable$Entry[]", "13", "2,496", "40,648"],
    ["java.util.WeakHashMap$Entry[]", "30", "2,400", "2,600"],
    ["java.lang.ref.Finalizer", "52", "2,080", "2,112"],
    ["java.util.jar.JarFile$JarFileEntry", "21", "2,016", "3,808"],
    ["java.security.Provider$ServiceKey", "75", "1,800", "2,664"],
    ["java.util.jar.JarFile", "27", "1,728", "24,664"],
    ["java.io.ExpiringCache$Entry", "69", "1,656", "12,240"],
    ["java.security.Provider$Service", "29", "1,624", "11,760"],
    ["sun.nio.cs.UTF_8$Encoder", "29", "1,624", "2,320"],
    ["java.io.ObjectStreamField", "40", "1,600", "2,376"],
    ["java.util.concurrent.Concurrent...", "7", "1,520", "29,528"],
    ["sun.util.locale.LocaleObjectCach...", "38", "1,520", "1,520"],
    ["java.util.WeakHashMap", "30", "1,440", "5,544"],
];

const logTabs = [
    ["Notes", NotesIcon, 80],
    ["Navigation History", NavIcon, 192],
    ["Compare Basket", CompareIcon, 180],
];

const log = [
    [InfoIcon, "Removed 201 unreachable ob", "org.eclipse.ma..."],
    [InfoIcon, "Heap D:\\03_Program\\Java_pr", "org.eclipse.ma..."],
    [InfoIcon, "Wrote threads call stacks to D", "org.eclipse.ma..."],
    [InfoIcon, "Detected compressed referen", "org.eclipse.ma..."],
    [ErrorIcon, "The persisted application mo", "org.eclipse.e4...."],
];

/* ---------- views ---------- */

const PanelTools = ({ children }) => (
    <HeadTools>
        {children}
        <IconButton aria-label="Minimize"><MinIcon /></IconButton>
        <IconButton aria-label="Maximize"><MaxIcon /></IconButton>
    </HeadTools>
);

const Inspector = () => {
    const [tab, setTab] = useState("Statics");
    return (
        <Panel>
            <PanelHead>
                <ViewTab $active $w={131}>
                    <InspectorIcon />
                    Inspector
                    <CloseButton aria-label="Close Inspector"><CloseIcon /></CloseButton>
                </ViewTab>
                <PanelTools>
                    <IconButton aria-label="Link with snapshot"><LinkIcon /></IconButton>
                </PanelTools>
            </PanelHead>
            <ItemList>
                {inspectorItems.map(([Icon, text]) => (
                    <Item key={text}>
                        <Icon />
                        {text}
                    </Item>
                ))}
            </ItemList>
            <SubTabs role="tablist">
                {inspectorTabs.map(([name, w]) => (
                    <SubTab key={name} role="tab" $w={w} $active={tab === name} onClick={() => setTab(name)}>
                        {name}
                    </SubTab>
                ))}
                <Spacer />
                <button aria-label="Pin tab"><PinIcon /></button>
            </SubTabs>
            <TableArea $margin="0 3px">
                <TableClip>
                    <Table $fill>
                        <colgroup>
                            <col width="50" />
                            <col width="147" />
                            <col />
                        </colgroup>
                        <thead>
                            <tr>
                                <Th>Ty...</Th>
                                <Th>Name</Th>
                                <Th>Value</Th>
                            </tr>
                        </thead>
                        <tbody>
                            {statics.map((row) => (
                                <Tr key={row[1]} $italic>
                                    {row.map((cell) => (
                                        <Td key={cell} $plain $pad={7}>{cell}</Td>
                                    ))}
                                </Tr>
                            ))}
                            <tr>
                                <Td $plain />
                                <Td $plain />
                                <Td $plain />
                            </tr>
                        </tbody>
                    </Table>
                </TableClip>
            </TableArea>
        </Panel>
    );
};

const HeapHistory = () => (
    <Panel>
        <PanelHead>
            <ViewTab $active $w={222}>
                <HistoryIcon />
                Heap Dump History
                <CloseButton aria-label="Close Heap Dump History"><CloseIcon /></CloseButton>
            </ViewTab>
            <PanelTools />
        </PanelHead>
        <TableClip $ruled $indent={3}>
            <Table>
                <colgroup>
                    <col width="400" />
                    <col />
                </colgroup>
                <thead>
                    <tr>
                        <Th $h={33}>Recently Used Files</Th>
                        <Th $last />
                    </tr>
                </thead>
                <tbody>
                    {recentFiles.map((file, i) => (
                        <Tr key={i}>
                            <Td $plain>
                                <NameCell>
                                    <DbIcon />
                                    {file}
                                </NameCell>
                            </Td>
                            <Td $plain $last />
                        </Tr>
                    ))}
                </tbody>
            </Table>
        </TableClip>
    </Panel>
);

const Editor = () => {
    const [selected, setSelected] = useState(1);
    return (
        <Panel $editor>
            <PanelHead $editor>
                <ViewTab $active $editor $w={235}>
                    <DbIcon />
                    dumpExceeded.hprof
                    <CloseButton aria-label="Close dumpExceeded.hprof"><CloseIcon /></CloseButton>
                </ViewTab>
                <PanelTools />
            </PanelHead>
            <Toolbar>
                {tools.map((tool, i) => {
                    if (tool === "sep") return <Separator key={i} />;
                    if (tool === "drop") return <DropButton key={i} aria-label="More"><DownIcon /></DropButton>;
                    const [name, Icon] = tool;
                    return <IconButton key={i} aria-label={name}><Icon /></IconButton>;
                })}
                <Spacer />
                <IconButton aria-label="Help"><HelpIcon /></IconButton>
            </Toolbar>
            <PageTabs>
                {pages.map(([name, Icon, w]) => (
                    <PageTab key={name} $w={w} $active={name === "Histogram"}>
                        <Icon />
                        {name}
                        {name === "Histogram" && (
                            <CloseButton aria-label="Close Histogram"><CloseIcon /></CloseButton>
                        )}
                    </PageTab>
                ))}
            </PageTabs>
            <PageBody>
                <TableClip>
                    <Table>
                        <colgroup>
                            <col width="313" />
                            <col width="258" />
                            <col width="279" />
                            <col width="374" />
                            <col />
                        </colgroup>
                        <thead>
                            <tr>
                                <Th $h={32}>Class Name</Th>
                                <Th $num>Objects</Th>
                                <Th $num>
                                    Shallow Heap
                                    <SortSpot><SortMark /></SortSpot>
                                </Th>
                                <Th $num>Retained Heap</Th>
                                <Th $last />
                            </tr>
                        </thead>
                        <tbody>
                            <Tr $muted>
                                <Td>
                                    <NameCell>
                                        <FilterIcon />
                                        {"<Regex>"}
                                    </NameCell>
                                </Td>
                                <Td $num>{"<Numeric>"}</Td>
                                <Td $num $sorted>{"<Numeric>"}</Td>
                                <Td $num>{"<Numeric>"}</Td>
                                <Td $last />
                            </Tr>
                            {histogram.map(([name, objects, shallow, retained], i) => {
                                const on = i === selected;
                                return (
                                    <Tr key={i} onClick={() => setSelected(i)}>
                                        <Td $selected={on}>
                                            <NameCell>
                                                <ClassIcon />
                                                {name}
                                            </NameCell>
                                        </Td>
                                        <Td $num $selected={on}>{objects}</Td>
                                        <Td $num $sorted $selected={on}>{shallow}</Td>
                                        <Td $num $selected={on}>{">= " + retained}</Td>
                                        <Td $last />
                                    </Tr>
                                );
                            })}
                        </tbody>
                    </Table>
                </TableClip>
                <ScrollBar size={25} len={26} icon={14} part="60%" />
            </PageBody>
            <Mark $x={25} $y={26} $w={24} $h={39} $line={3} />
            <Mark $x={1124} $y={65} $w={163} $h={45} $line={3} />
            <Mark $x={-5} $y={180} $w={1259} $h={49} $line={3} />
            <Mark $x={1309} $y={107} $w={6} $h={6} $line={3} $dot />
            <MarkText>直方图里，String 类型的对象占用过多内存</MarkText>
        </Panel>
    );
};

const ErrorLog = () => {
    const [filter, setFilter] = useState("");
    return (
        <Panel>
            <PanelHead>
                <ViewTab $active $w={129}>
                    <ErrorIcon />
                    Error Log
                    <CloseButton aria-label="Close Error Log"><CloseIcon /></CloseButton>
                </ViewTab>
                {logTabs.map(([name, Icon, w]) => (
                    <ViewTab key={name} $w={w}>
                        <Icon />
                        {name}
                    </ViewTab>
                ))}
                <PanelTools>
                    <IconButton aria-label="Export log"><ExportLogIcon /></IconButton>
                    <IconButton aria-label="Import log"><ImportLogIcon /></IconButton>
                    <DropButton aria-label="More"><DownIcon /></DropButton>
                    <Separator />
                    <IconButton aria-label="Clear log viewer"><ClearLogIcon /></IconButton>
                    <IconButton aria-label="Delete log"><DeleteIcon /></IconButton>
                    <IconButton aria-label="Open log"><OpenLogIcon /></IconButton>
                    <IconButton aria-label="Restore log"><RestoreLogIcon /></IconButton>
                    <IconButton aria-label="View menu"><MenuDotsIcon /></IconButton>
                </PanelTools>
            </PanelHead>
            <LogTitle>Workspace Log</LogTitle>
            <FilterBox>
                <FilterInput
                    aria-label="type filter text"
                    value={filter || "type filter text"}
                    onChange={(e) => setFilter(e.target.value)}
                />
                <button aria-label="Clear" onClick={() => setFilter("")}>
                    <Svg><path d="M3 3l10 10M13 3L3 13" stroke="#666" strokeWidth="2.200" /></Svg>
                </button>
            </FilterBox>
            <TableArea $margin="0 4px">
                <TableClip>
                    <Table>
                        <colgroup>
                            <col width="299" />
                            <col width="150" />
                            <col width="150" />
                            <col />
                        </colgroup>
                        <thead>
                            <tr>
                                <Th>Message</Th>
                                <Th>Plug-in</Th>
                                <Th>
                                    Date
                                    <SortSpot><SortMark /></SortSpot>
                                </Th>
                                <Th $last />
                            </tr>
                        </thead>
                        <tbody>
                            {log.map(([Icon, message, plugin]) => (
                                <Tr key={message} $h={27}>
                                    <Td $pad={26} $line="#e0e0e0">
                                        <NameCell $gap={5}>
                                            <Icon />
                                            {message}
                                        </NameCell>
                                    </Td>
                                    <Td $pad={6} $line="#e0e0e0">
                                        <NameCell>{plugin}</NameCell>
                                    </Td>
                                    <Td $pad={6} $sorted $line="#e0e0e0">2021/10/22 上...</Td>
                                    <Td $last $line="#e0e0e0" />
                                </Tr>
                            ))}
                        </tbody>
                    </Table>
                </TableClip>
                <ScrollBar size={25} len={26} icon={14} part="25%" />
            </TableArea>
        </Panel>
    );
};

const Welcome = () => (
    <Panel>
        <PanelHead>
            <ViewTab $active $w={131}>
                <WelcomeIcon />
                Welcome
                <CloseButton aria-label="Close Welcome"><CloseIcon /></CloseButton>
            </ViewTab>
            <PanelTools>
                <IconButton aria-label="Home"><HomeIcon /></IconButton>
                <IconButton aria-label="Back"><BackIcon /></IconButton>
                <IconButton aria-label="Forward"><ForwardIcon /></IconButton>
            </PanelTools>
        </PanelHead>
        <WelcomeBody>
            <WelcomeRow>
                <WelcomeClip>
                    <WelcomePage>
                        <TopicTitle>Overview</TopicTitle>
                        <TopicImage $lift={-6} $h={37}><GlobeIcon /></TopicImage>
                        <TopicText>Provides information for the quick start.</TopicText>
                        <TopicTitle>Tutorials</TopicTitle>
                        <TopicImage $lift={-1} $h={33}><BoardIcon /></TopicImage>
                        <TopicText>Offers several step-by-step tutorials for quick access.</TopicText>
                    </WelcomePage>
                </WelcomeClip>
                <ScrollBar size={25} len={38} icon={24} part="100%" />
            </WelcomeRow>
            <Corner>
                <ScrollBar across size={25} len={34} icon={24} part="100%" />
            </Corner>
        </WelcomeBody>
    </Panel>
);

const App = () => (
    <Shell>
        <GlobalStyle />
        <TitleBar>
            <AppIcon />
            <AppTitle>Eclipse Memory Analyzer</AppTitle>
            <WindowButton aria-label="Minimize window">
                <Svg><path d="M0 8.500h15" stroke="#000" /></Svg>
            </WindowButton>
            <WindowButton aria-label="Restore window">
                <Svg><path d="M.5 3.500h11v12H.5zM3.500 3.500v-3h11v12h-3" stroke="#000" /></Svg>
            </WindowButton>
            <WindowButton aria-label="Close window">
                <Svg><path d="M.5.5l15 15M15.500.5l-15 15" stroke="#000" /></Svg>
            </WindowButton>
        </TitleBar>
        <MenuBar>
            {menus.map((name) => (
                <MenuItem key={name}>
                    <u>{name[0]}</u>
                    {name.slice(1)}
                </MenuItem>
            ))}
        </MenuBar>
        <Workbench>
            <Column $rows="780fr 520fr">
                <Inspector />
                <HeapHistory />
            </Column>
            <Column $rows="1040fr 260fr">
                <Editor />
                <ErrorLog />
            </Column>
            <Column $rows="1fr">
                <Welcome />
            </Column>
        </Workbench>
        <StatusBar>
            <Grip />
        </StatusBar>
    </Shell>
);

export default App;
